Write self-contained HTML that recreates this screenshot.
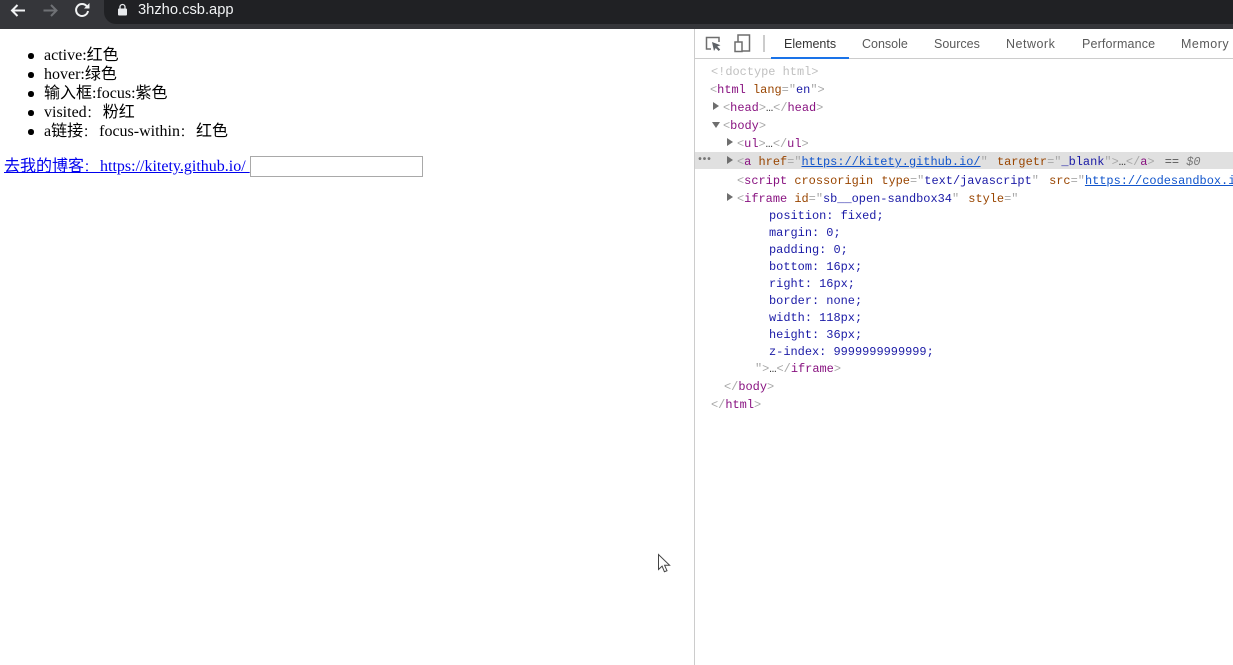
<!DOCTYPE html>
<html lang="zh-CN"><head><meta charset="utf-8"><title>3hzho.csb.app</title>
<style>
html,body{margin:0;padding:0;background:#fff;width:1233px;height:665px;overflow:hidden}
#bar{position:absolute;left:0;top:0;width:1233px;height:29px;background:#35363a}
#url{position:absolute;left:104px;top:0;width:1129px;height:24px;background:#202124;border-radius:0 0 0 12px}
#host{position:absolute;left:138px;top:0;font:14.7px/21px "Liberation Sans",sans-serif;color:#f1f3f4}
.l{position:absolute;left:44px;font:16px/19px "Liberation Serif","WenQuanYi Zen Hei",serif;color:#000;white-space:nowrap}
.k{font-size:12px;letter-spacing:4px}
.b{position:absolute;left:28px;width:5.5px;height:5.5px;border-radius:50%;background:#000}
#lnk{position:absolute;left:4px;top:157px;font:16px/19px "Liberation Serif","WenQuanYi Zen Hei",serif;color:#00e;text-decoration:underline;white-space:pre}
#inp{position:absolute;left:250px;top:156px;width:171px;height:19px;border:1px solid #a9a9a9;background:#fff}
#dv{position:absolute;left:694px;top:29px;width:539px;height:636px;background:#fff;border-left:1px solid #ccc;overflow:hidden}
#tabs{position:absolute;left:0;top:0;width:539px;height:29px;border-bottom:1px solid #ccc;background:#fff}
.t{position:absolute;top:6px;font:12.5px/18px "Liberation Sans",sans-serif;color:#5a5a5a;white-space:nowrap}
.c{position:absolute;font:11.95px/17px "Liberation Mono",monospace;white-space:pre;color:#a94a8c;height:17px}
.n{color:#881280}.g{color:#a8a8a8}.a{color:#994500}.v{color:#1a1aa6}.u{color:#1155cc;text-decoration:underline}
.tri{position:absolute;width:0;height:0}
.r{border-left:6px solid #6e6e6e;border-top:4px solid transparent;border-bottom:4px solid transparent}
.d{border-top:6px solid #6e6e6e;border-left:4px solid transparent;border-right:4px solid transparent}
</style></head><body>
<div id="bar"></div>
<div id="url"></div>
<svg style="position:absolute;left:0;top:0" width="110" height="24" fill="none">
<path d="M25 10.500H12.500M17.500 5l-5.500 5.500 5.500 5.500" stroke="#f1f3f4" stroke-width="2"/>
<path d="M43.500 10.500H56M51 5l5.500 5.500L51 16" stroke="#6f7175" stroke-width="2"/>
<path d="M86.800 6.300A6 6 0 1 0 88 11" stroke="#f1f3f4" stroke-width="2"/>
<path d="M84 8.500h5.500V3z" fill="#f1f3f4"/>
</svg>
<svg style="position:absolute;left:117px;top:3px" width="11" height="13" fill="none">
<path d="M3 6V4a2.500 2.500 0 0 1 5 0v2" stroke="#e8eaed" stroke-width="1.300"/>
<rect x="1" y="5.500" width="9" height="7" rx="1" fill="#e8eaed"/>
</svg>
<div id="host">3hzho.csb.app</div>

<div class="b" style="top:53px"></div><div class="l" style="top:46px">active:红色</div>
<div class="b" style="top:72px"></div><div class="l" style="top:65px">hover:绿色</div>
<div class="b" style="top:91px"></div><div class="l" style="top:84px">输入框:focus:紫色</div>
<div class="b" style="top:110px"></div><div class="l" style="top:103px">visited<span class="k">：</span>粉红</div>
<div class="b" style="top:129px"></div><div class="l" style="top:122px">a链接<span class="k">：</span>focus-within<span class="k">：</span>红色</div>
<div id="lnk">去我的博客<span class="k">：</span>https://kitety.github.io/ </div>
<div id="inp"></div>

<svg style="position:absolute;left:657px;top:553px" width="16" height="22">
<path d="M1.500 1.500v15l3.600-3.400 2.300 5.600 2.600-1-2.400-5.400h5z" fill="#fff" stroke="#444" stroke-width="1"/>
</svg>

<div id="dv">
<div id="tabs">
<svg style="position:absolute;left:9px;top:5px" width="50" height="19" fill="none">
<path d="M7 15H2.500V3.500H15V8" stroke="#6e6e6e" stroke-width="1.500"/>
<path d="M8 8l8.500 3.200-3.300 1.300 3 3-1.500 1.500-3-3L10 17z" fill="#5f6368"/>
<rect x="34" y="1" width="11.500" height="16" fill="none" stroke="#6e6e6e" stroke-width="1.500"/>
<rect x="31" y="8" width="7" height="9.500" fill="#fff" stroke="#6e6e6e" stroke-width="1.500"/>
</svg>
<div style="position:absolute;left:68px;top:6px;width:2px;height:17px;background:#ccc"></div>
<div class="t" style="left:89px;color:#333">Elements</div>
<div style="position:absolute;left:76px;top:28px;width:78px;height:2px;background:#1a73e8"></div>
<div class="t" style="left:167px">Console</div>
<div class="t" style="left:239px">Sources</div>
<div class="t" style="left:311px;letter-spacing:.5px">Network</div>
<div class="t" style="left:387px;letter-spacing:.15px">Performance</div>
<div class="t" style="left:486px;letter-spacing:.5px">Memory</div>
</div>
<div style="position:absolute;left:0;top:123px;width:539px;height:17px;background:#e0e0e0"></div>
<div style="position:absolute;left:2px;top:125px;font:bold 10px/14px 'Liberation Mono',monospace;color:#777;letter-spacing:-1.500px">•••</div>
<div class="c" style="left:16px;top:35px;color:#c0c0c0">&lt;!doctype html&gt;</div>
<div class="c" style="left:15px;top:53px"><span class="g">&lt;</span><span class="n">html</span> <span class="a">lang</span><span class="g">="</span><span class="v">en</span><span class="g">"&gt;</span></div>
<div class="tri r" style="left:18px;top:73px"></div>
<div class="c" style="left:28px;top:71px"><span class="g">&lt;</span><span class="n">head</span><span class="g">&gt;</span><span style="color:#333">…</span><span class="g">&lt;/</span><span class="n">head</span><span class="g">&gt;</span></div>
<div class="tri d" style="left:17px;top:93px"></div>
<div class="c" style="left:28px;top:89px"><span class="g">&lt;</span><span class="n">body</span><span class="g">&gt;</span></div>
<div class="tri r" style="left:32px;top:109px"></div>
<div class="c" style="left:42px;top:107px"><span class="g">&lt;</span><span class="n">ul</span><span class="g">&gt;</span><span style="color:#333">…</span><span class="g">&lt;/</span><span class="n">ul</span><span class="g">&gt;</span></div>
<div class="tri r" style="left:32px;top:127px"></div>
<div class="c" style="left:42px;top:125px"><span class="g">&lt;</span><span class="n">a</span> <span class="a">href</span><span class="g">="</span><span class="u">https://kitety.github.io/</span><span class="g">"</span> <span class="a" style="margin-left:2px">targetr</span><span class="g">="</span><span class="v">_blank</span><span class="g">"&gt;</span><span style="color:#333">…</span><span class="g">&lt;/</span><span class="n">a</span><span class="g">&gt;</span> <span style="color:#555;margin-left:3px">==</span> <span style="color:#777;font-style:italic">$0</span></div>
<div class="c" style="left:42px;top:144px"><span class="g">&lt;</span><span class="n">script</span> <span class="a">crossorigin</span> <span class="a" style="margin-left:1px">type</span><span class="g">="</span><span class="v">text/javascript</span><span class="g">"</span> <span class="a" style="margin-left:3px">src</span><span class="g">="</span><span class="u">https://codesandbox.io/static/js/sandbox.js</span></div>
<div class="tri r" style="left:32px;top:164px"></div>
<div class="c" style="left:42px;top:162px"><span class="g">&lt;</span><span class="n">iframe</span> <span class="a">id</span><span class="g">="</span><span class="v">sb__open-sandbox34</span><span class="g">"</span> <span class="a" style="margin-left:2px">style</span><span class="g">="</span></div>
<div class="c v" style="left:74px;top:179px;color:#1a1aa6">position: fixed;</div>
<div class="c v" style="left:74px;top:196px;color:#1a1aa6">margin: 0;</div>
<div class="c v" style="left:74px;top:213px;color:#1a1aa6">padding: 0;</div>
<div class="c v" style="left:74px;top:230px;color:#1a1aa6">bottom: 16px;</div>
<div class="c v" style="left:74px;top:247px;color:#1a1aa6">right: 16px;</div>
<div class="c v" style="left:74px;top:264px;color:#1a1aa6">border: none;</div>
<div class="c v" style="left:74px;top:281px;color:#1a1aa6">width: 118px;</div>
<div class="c v" style="left:74px;top:298px;color:#1a1aa6">height: 36px;</div>
<div class="c v" style="left:74px;top:315px;color:#1a1aa6">z-index: 9999999999999;</div>
<div class="c" style="left:60px;top:332px"><span class="g">"&gt;</span><span style="color:#333">…</span><span class="g">&lt;/</span><span class="n">iframe</span><span class="g">&gt;</span></div>
<div class="c" style="left:29px;top:350px"><span class="g">&lt;/</span><span class="n">body</span><span class="g">&gt;</span></div>
<div class="c" style="left:16px;top:368px"><span class="g">&lt;/</span><span class="n">html</span><span class="g">&gt;</span></div>
</div>
</body></html>
